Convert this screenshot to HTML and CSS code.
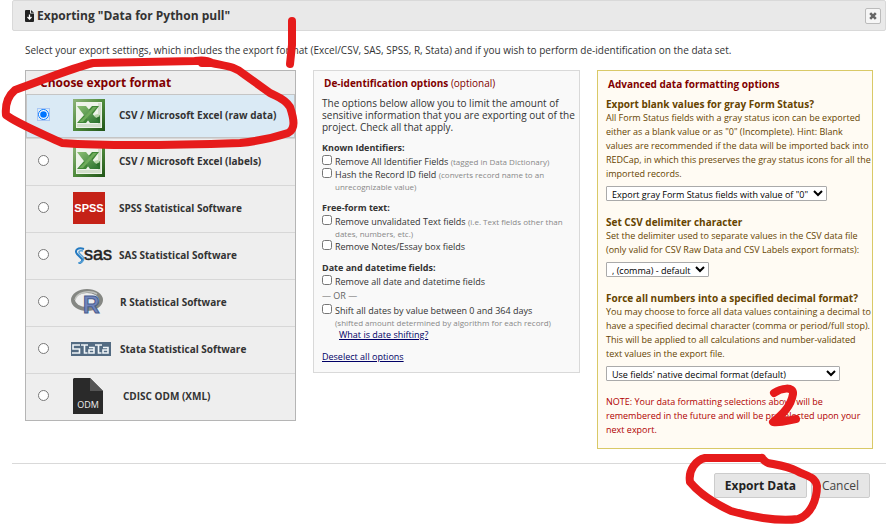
FILE: index.html
```html
<!DOCTYPE html>
<html lang="en">
<head>
<meta charset="utf-8">
<title>Exporting "Data for Python pull"</title>
<link rel="stylesheet" href="styles.css">
</head>
<body>
<main class="dialog">
  <header class="titlebar">
    <svg class="title-icon" viewBox="0 0 9 12" aria-hidden="true"><path fill="#222" d="M1 0h4v3.500h4V11a1 1 0 0 1-1 1H1a1 1 0 0 1-1-1V1a1 1 0 0 1 1-1zM6 0l3 2.700H6z"/><path d="M4.500 4.500v4M2.500 7l2 2 2-2" fill="none" stroke="#fff" stroke-width="1.300"/></svg>
    <h1>Exporting "Data for Python pull"</h1>
    <button class="close" type="button" aria-label="Close"><svg viewBox="0 0 8 8"><path d="M1.200 1.200l5.600 5.600M6.800 1.200L1.200 6.800" stroke="#666" stroke-width="2.600"/></svg></button>
  </header>
  <form class="content">
    <p class="intro">Select your export settings, which includes the export format (Excel/CSV, SAS, SPSS, R, Stata) and if you wish to perform de-identification on the data set.</p>
    <div class="columns">
      <section class="formats">
        <h2>Choose export format</h2>
        <label class="format selected"><input type="radio" name="format" checked><span class="logo"><svg class="square" viewBox="0 0 32 32"><use href="#excel"/></svg></span><span>CSV / Microsoft Excel (raw data)</span></label>
        <label class="format"><input type="radio" name="format"><span class="logo"><svg class="square" viewBox="0 0 32 32"><defs><linearGradient id="green" x2="1" y2="1"><stop stop-color="#8fb57b"/><stop offset=".5" stop-color="#4f8b3c"/><stop offset="1" stop-color="#205417"/></linearGradient><linearGradient id="band" x2="1" y2="1"><stop stop-color="#8bbf73"/><stop offset="1" stop-color="#28702c"/></linearGradient><g id="excel"><path fill="url(#green)" d="M0 0h32v32H0z"/><path fill="#eef3ea" d="M3 3h26v26H3z"/><path fill="#d3dfcc" d="M4 25h24v3H4zM25 4h3v22h-3z"/><path fill="#3f8636" d="M19 7h7L13 24H4z"/><path fill="#2c702c" d="M18 19l9-3v8h-9z"/><path fill="url(#band)" d="M4 7h9l14 17H17z"/><path fill="#6fab5b" d="M20 8h4L10 23H6l9-9z"/><path fill="#b8d6ab" d="M21 16l4-1 2 2-4 2z"/></g></defs><use href="#excel"/></svg></span><span>CSV / Microsoft Excel (labels)</span></label>
        <label class="format"><input type="radio" name="format"><span class="logo"><svg class="square" viewBox="0 0 32 32"><path fill="#c52217" d="M0 0h32v32H0z"/><text class="spss" x="16" y="20" text-anchor="middle">SPSS</text></svg></span><span>SPSS Statistical Software</span></label>
        <label class="format"><input type="radio" name="format"><span class="logo"><svg class="wide" viewBox="0 0 40 20"><g fill="none" stroke="#247ac1" stroke-width="2"><path d="M11 4C5 2 1 5 4 9l5 5c1 2-1 4-3 4"/><path stroke="#58a1d5" stroke-width="1.500" d="M10 6C6 5 5 7 7 9l3 3c2 3-1 6-5 6"/></g><text class="sas" x="11" y="15">sas</text></svg></span><span>SAS Statistical Software</span></label>
        <label class="format"><input type="radio" name="format"><span class="logo logo-r"><svg class="square" viewBox="0 0 32 32"><ellipse cx="16" cy="14" rx="14" ry="9" fill="none" stroke="#858783" stroke-width="4"/><path d="M4 14c1-7 14-11 22-6" fill="none" stroke="#c1c3bf" stroke-width="1.500"/><text class="r-mark" x="12" y="27">R</text></svg></span><span>R Statistical Software</span></label>
        <label class="format"><input type="radio" name="format"><span class="logo logo-stata"><svg class="wide" viewBox="0 0 40 14"><path fill="#536b82" d="M0 0h40v14H0z"/><g fill="none" stroke="#f0f5f8" stroke-width="1.600"><path d="M9 3H2v4h6.500v4H1M10 3h7M13.500 3v8h3M18 5.500h5V11h-5V8h5M24 3h7M27.500 3v8h3M32 5.500h5V11h-5V8h5"/></g></svg></span><span>Stata Statistical Software</span></label>
        <label class="format"><input type="radio" name="format"><span class="logo logo-odm"><svg class="file" viewBox="0 0 30 36"><path fill="#2a2a2a" d="M1 0h16l13 13v23H0V1z"/><path fill="#555" d="M17 0l13 13H17z"/><text class="odm" x="15" y="30" text-anchor="middle">ODM</text></svg></span><span>CDISC ODM (XML)</span></label>
      </section>

      <section class="deid">
        <h2>De-identification options <span>(optional)</span></h2>
        <p class="lead">The options below allow you to limit the amount of sensitive information that you are exporting out of the project. Check all that apply.</p>
        <h3>Known Identifiers:</h3>
        <label class="check"><input type="checkbox"><span>Remove All Identifier Fields <small>(tagged in Data Dictionary)</small></span></label>
        <label class="check"><input type="checkbox"><span>Hash the Record ID field <small>(converts record name to an unrecognizable value)</small></span></label>
        <h3>Free-form text:</h3>
        <label class="check"><input type="checkbox"><span>Remove unvalidated Text fields <small>(i.e. Text fields other than dates, numbers, etc.)</small></span></label>
        <label class="check"><input type="checkbox"><span>Remove Notes/Essay box fields</span></label>
        <h3>Date and datetime fields:</h3>
        <label class="check"><input type="checkbox"><span>Remove all date and datetime fields</span></label>
        <p class="or">— OR —</p>
        <label class="check"><input type="checkbox"><span>Shift all dates by value between 0 and 364 days <small class="block">(shifted amount determined by algorithm for each record)</small></span></label>
        <a class="shift" href="#">What is date shifting?</a>
        <a class="deselect" href="#">Deselect all options</a>
      </section>

      <section class="advanced">
        <h2>Advanced data formatting options</h2>
        <label class="field-title" for="status">Export blank values for gray Form Status?</label>
        <p>All Form Status fields with a gray status icon can be exported either as a blank value or as "0" (Incomplete). Hint: Blank<br>values are recommended if the data will be imported back into REDCap, in which this preserves the gray status icons for all the imported records.</p>
        <select id="status"><option>Export gray Form Status fields with value of "0"</option></select>
        <label class="field-title" for="delimiter">Set CSV delimiter character</label>
        <p>Set the delimiter used to separate values in the CSV data file (only valid for CSV Raw Data and CSV Labels export formats):</p>
        <select id="delimiter"><option>, (comma) - default</option></select>
        <label class="field-title" for="decimal">Force all numbers into a specified decimal format?</label>
        <p>You may choose to force all data values containing a decimal to have a specified decimal character (comma or period/full stop). This will be applied to all calculations and number-validated text values in the export file.</p>
        <select id="decimal" class="long"><option>Use fields' native decimal format (default)</option></select>
        <p class="note">NOTE: Your data formatting selections above will be remembered in the future and will be preselected upon your next export.</p>
      </section>
    </div>
  </form>
  <footer class="actions"><button type="button" class="primary">Export Data</button><button type="button">Cancel</button></footer>
</main>
<svg class="marks" width="887" height="525" viewBox="0 0 887 525" aria-hidden="true">
  <path d="M292 21L292 45L290 64"/>
  <path d="M212 63C207 60 201 60 195 61L93 63C69 69 44 80 15 90C8 96 5 105 6 115C18 124 43 134 62 143C105 146 180 145 240 143C259 141 276 137 288 133C296 129 294 119 290 107C284 98 277 97 270 93L245 75C235 66 225 66 212 63L202 63"/>
  <path d="M774 393C781 388 794 386 793 394C791 406 783 414 773 422C782 423 789 420 796 419"/>
  <path d="M762 458H705C696 460 688 470 690 482C698 492 714 503 731 511C748 516 777 522 798 519C811 515 817 499 817 486C815 476 806 476 797 471C787 466 778 465 768 463C765 462 764 460 762 458"/>
</svg>
</body>
</html>
```

FILE: styles.css
```css
* { box-sizing: border-box; }
body { margin: 0; background: #fff; color: #333; font-family: "Open Sans", sans-serif; font-size: 9px; }
h1, h2, h3, p { margin: 0; }
button, select { font-family: inherit; }
.dialog { margin-left: 12px; margin-right: 1px; }
.titlebar { display: flex; align-items: center; height: 31px; padding: 0 4px 0 12px; border: 1px solid #d9d9d9; border-radius: 2px; background: #e9e9e9; }
.title-icon { width: 9px; height: 12px; margin-right: 3px; }
h1 { flex: 1; font-size: 12px; line-height: 16px; }
.close { display: grid; place-items: center; width: 16px; height: 16px; padding: 0; border: 1px solid #bbb; border-radius: 2px; background: #f6f6f6; }
.close svg { width: 8px; height: 8px; }
.content { padding: 12px 13px 0 13px; }
.intro { font-size: 10px; line-height: 14px; }
.columns { display: grid; grid-template-columns: 271fr 267fr 276fr; gap: 17px; align-items: start; margin-top: 13px; }
.formats { border: 1px solid #b5b5b5; background: #eee; }
h2 { color: #800000; font-size: 10px; line-height: 14px; }
.formats h2 { padding: 4px 14px; font-size: 12px; line-height: 15px; }
.format { display: flex; align-items: center; height: 47px; padding-bottom: 3px; border-top: 1px solid #d7d7d7; font-size: 10px; font-weight: 700; }
.format.selected { height: 44px; background: #daeaf5; border: 1px solid #c5c5c5; }
.format input { width: 11px; height: 11px; margin: 0 24px 0 12px; }
.format.selected input { margin-left: 11px; outline: 1px solid #a9c7f4; }
.logo { display: flex; width: 46px; }
.logo-r, .logo-stata { width: 49px; margin-left: -2px; }
.logo-odm { width: 50px; }
.square { width: 32px; height: 32px; }
.wide { width: 40px; height: auto; }
.file { width: 30px; height: 36px; }
.spss { font: 700 11px "Liberation Sans", sans-serif; fill: #fff; }
.sas { font: 18px "Liberation Sans", sans-serif; fill: #222; stroke: #222; stroke-width: 0.5px; }
.r-mark { font: 700 23px "Liberation Sans", sans-serif; fill: #7185bc; stroke: #475c8d; stroke-width: 1px; }
.odm { font: 9px "Open Sans", sans-serif; fill: #eee; }
.deid { padding: 5px 4px 9px 8px; border: 1px solid #d9d9d9; background: #f9f9f9; }
.deid h2 { padding-left: 2px; }
.deid h2 span { font-weight: 400; }
.lead { margin-top: 7px; font-size: 10px; line-height: 12px; }
h3 { margin: 9px 0 1px; font-size: 9px; line-height: 12px; }
.check { display: flex; gap: 3px; line-height: 12px; }
.check input { flex: none; width: 10px; height: 10px; margin: 0; }
.check span { padding-top: 1px; }
small { font-size: 8px; color: #888; }
.block { display: block; }
.or { line-height: 16px; color: #666; }
a { color: #000066; line-height: 12px; display: table; }
.shift { margin-left: 17px; }
.deselect { margin-top: 10px; }
.advanced { padding: 6px 0 11px 8px; border: 1px solid #d9c967; background: #fffbf3; color: #664400; line-height: 14px; }
.advanced h2 { padding-left: 2px; }
.field-title { display: block; margin-top: 14px; font-size: 10px; line-height: 14px; font-weight: 700; }
h2 + .field-title { margin-top: 6px; }
select { display: block; height: 15px; margin-top: 5px; padding: 0 1px; border: 1px solid #aaa; border-radius: 1px; background: #fff; color: #000; font-size: 9px; }
.long { width: 88%; }
.note { margin-top: 14px; padding-right: 8px; color: #b00000; }
.actions { display: flex; justify-content: flex-end; gap: 4px; margin-top: 14px; padding: 9px 16px 0 0; border-top: 1px solid #d9d9d9; }
.actions button { height: 25px; padding: 0 10px; border: 1px solid #ccc; border-radius: 2px; background: #e6e6e6; color: #444; font-size: 12px; }
.actions .primary { color: #222; font-weight: 700; }
.marks { position: absolute; top: 0; left: 0; pointer-events: none; fill: none; stroke: #e61b1b; stroke-width: 8; stroke-linecap: round; stroke-linejoin: round; }
```
